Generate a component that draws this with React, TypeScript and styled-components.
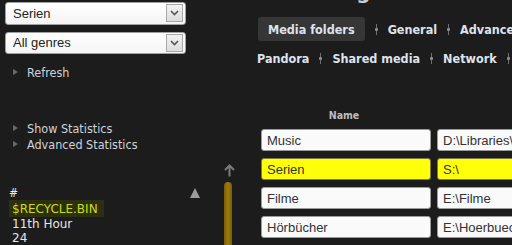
import React from "react";
import styled, { createGlobalStyle } from "styled-components";

const Global = createGlobalStyle`
  html, body { margin: 0; padding: 0; background: #1c1c1c; overflow: hidden; }
  * { box-sizing: border-box; }
`;

const Page = styled.div`
  width: 512px;
  height: 245px;
  display: flex;
  overflow: hidden;
  background: #1c1c1c;
  font-family: "DejaVu Sans Condensed", "DejaVu Sans", sans-serif;
`;

const Left = styled.div`
  width: 215px;
  flex: none;
  padding: 2px 0 0 5px;
  display: flex;
  flex-direction: column;
`;

const SelectBox = styled.div`
  width: 181px;
  height: 23px;
  background: linear-gradient(#ffffff, #f4f4f4);
  border: 1px solid #a0a0a0;
  border-radius: 3px;
  display: flex;
  align-items: center;
  justify-content: space-between;
  padding: 0 2px 0 7px;
  font-family: "Liberation Sans", Arial, sans-serif;
  font-size: 13px;
  color: #222;
  & + & { margin-top: 7px; }
`;

const SelectArrow = styled.div`
  width: 17px;
  height: 18px;
  border: 1px solid #a8a8a8;
  background: linear-gradient(#f2f2f2, #dcdcdc);
  display: flex;
  align-items: center;
  justify-content: center;
`;

const Menu = styled.div<{ $top: number }>`
  margin-top: ${(p) => p.$top}px;
  display: flex;
  flex-direction: column;
`;

const MenuItem = styled.div`
  height: 16px;
  display: flex;
  align-items: center;
  padding-left: 8px;
  font-size: 12.5px;
  color: #cfd3da;
  &::before {
    content: "";
    width: 0;
    height: 0;
    border-top: 3.5px solid transparent;
    border-bottom: 3.5px solid transparent;
    border-left: 5px solid #6a6a6a;
    margin-right: 9px;
  }
`;

const ListHeader = styled.div`
  margin-top: 34px;
  height: 14px;
  display: flex;
  align-items: center;
  justify-content: space-between;
  padding-left: 4px;
  padding-right: 15px;
  font-size: 12px;
  color: #eeeeee;
`;

const SortUp = styled.span`
  width: 0;
  height: 0;
  border-left: 5.5px solid transparent;
  border-right: 5.5px solid transparent;
  border-bottom: 10px solid #9a9a9a;
`;

const ListRow = styled.div<{ $active?: boolean }>`
  height: ${(p) => (p.$active ? 17 : 14)}px;
  width: ${(p) => (p.$active ? "95px" : "auto")};
  margin-left: 4px;
  padding-left: 3px;
  display: flex;
  align-items: center;
  font-family: "DejaVu Sans", sans-serif;
  font-size: 12px;
  color: ${(p) => (p.$active ? "#c9de10" : "#e6e6e6")};
  background: ${(p) => (p.$active ? "#2d2f12" : "transparent")};
`;

const ScrollCol = styled.div`
  width: 30px;
  flex: none;
  display: flex;
  flex-direction: column;
  align-items: flex-start;
  padding: 164px 0 0 9px;
`;

const ScrollArrow = styled.div`
  width: 11px;
  display: flex;
  justify-content: center;
`;

const ScrollBar = styled.div`
  margin-top: 5px;
  width: 8px;
  flex: 1;
  border-radius: 4px 4px 0 0;
  background: linear-gradient(90deg, #7a5c06, #a07c10 50%, #7a5c06);
`;

const Right = styled.div`
  flex: 1;
  min-width: 0;
  padding-left: 12px;
  display: flex;
  flex-direction: column;
  overflow: hidden;
`;

const Title = styled.div`
  margin-top: -20px;
  height: 24px;
  display: flex;
  align-items: center;
  gap: 12px;
  padding-left: 5px;
  font-family: "DejaVu Sans", sans-serif;
  font-weight: bold;
  font-size: 20px;
  color: #c8ccd4;
  white-space: nowrap;
`;

const TabRow = styled.div<{ $top: number }>`
  margin-top: ${(p) => p.$top}px;
  display: flex;
  align-items: center;
  white-space: nowrap;
`;

const Tab = styled.div<{ $active?: boolean }>`
  height: 24px;
  display: flex;
  align-items: center;
  padding: 0 ${(p) => (p.$active ? 10 : 0)}px;
  margin-left: ${(p) => (p.$active ? 1 : 0)}px;
  border-radius: 3px;
  background: ${(p) => (p.$active ? "#363636" : "transparent")};
  font-weight: bold;
  font-size: 12.5px;
  color: #dde3ec;
  flex: none;
`;

const Sep = styled.span`
  position: relative;
  flex: none;
  width: 3px;
  height: 11px;
  margin: 0 10px;
  &::before {
    content: "";
    position: absolute;
    left: 1px;
    top: 0;
    bottom: 0;
    width: 1px;
    background: #6e6e6e;
  }
  &::after {
    content: "";
    position: absolute;
    left: 0;
    top: 4px;
    width: 3px;
    height: 3px;
    border-radius: 1px;
    background: #8a8a8a;
  }
`;

const Header = styled.div`
  margin-top: 38px;
  width: 174px;
  text-align: center;
  font-weight: bold;
  font-size: 10.5px;
  color: #bdbdbd;
  height: 14px;
  line-height: 14px;
`;

const Table = styled.div`
  margin-top: 7px;
  display: grid;
  grid-template-columns: 170px 120px;
  column-gap: 6px;
  row-gap: 7px;
  padding-left: 4px;
`;

const Cell = styled.div<{ $mark?: boolean }>`
  height: 22px;
  border: 1px solid ${(p) => (p.$mark ? "#7a7a40" : "#9a9a9a")};
  border-radius: 3px;
  background: ${(p) => (p.$mark ? "#ffff0a" : "#fafafa")};
  display: flex;
  align-items: center;
  padding-left: 5px;
  font-family: "Liberation Sans", Arial, sans-serif;
  font-size: 13px;
  color: #333;
  white-space: nowrap;
  overflow: hidden;
`;

const Chevron = () => (
  <svg width="9" height="6" viewBox="0 0 9 6">
    <path d="M1 1 L4.5 4.5 L8 1" fill="none" stroke="#555" strokeWidth="1.6" />
  </svg>
);

const UpArrow = () => (
  <svg width="11" height="13" viewBox="0 0 11 13">
    <path d="M5.5 1.5 V12.5 M1 6 L5.5 1.5 L10 6" fill="none" stroke="#7a7a7a" strokeWidth="2" />
  </svg>
);

const Gear = () => (
  <svg width="14" height="24" viewBox="0 0 14 24">
    <rect x="1" y="10" width="3" height="10" fill="#9aa0a8" />
    <rect x="6" y="12" width="3" height="8" fill="#9aa0a8" />
    <rect x="11" y="16" width="2" height="4" fill="#9aa0a8" />
  </svg>
);

const folders: [string, string, boolean][] = [
  ["Music", "D:\\Libraries\\Tracks", false],
  ["Serien", "S:\\", true],
  ["Filme", "E:\\Filme", false],
  ["Hörbücher", "E:\\Hoerbuecher", false],
];

export default function App() {
  return (
    <Page>
      <Global />
      <Left>
        <SelectBox>
          Serien
          <SelectArrow>
            <Chevron />
          </SelectArrow>
        </SelectBox>
        <SelectBox>
          All genres
          <SelectArrow>
            <Chevron />
          </SelectArrow>
        </SelectBox>
        <Menu $top={10}>
          <MenuItem>Refresh</MenuItem>
        </Menu>
        <Menu $top={40}>
          <MenuItem>Show Statistics</MenuItem>
          <MenuItem>Advanced Statistics</MenuItem>
        </Menu>
        <ListHeader>
          #
          <SortUp />
        </ListHeader>
        <ListRow $active>$RECYCLE.BIN</ListRow>
        <ListRow>11th Hour</ListRow>
        <ListRow>24</ListRow>
      </Left>
      <ScrollCol>
        <ScrollArrow>
          <UpArrow />
        </ScrollArrow>
        <ScrollBar />
      </ScrollCol>
      <Right>
        <Title>
          <Gear />
          Settings
        </Title>
        <TabRow $top={13}>
          <Tab $active>Media folders</Tab>
          <Sep />
          <Tab>General</Tab>
          <Sep />
          <Tab>Advanced</Tab>
        </TabRow>
        <TabRow $top={5}>
          <Tab>Pandora</Tab>
          <Sep />
          <Tab>Shared media</Tab>
          <Sep />
          <Tab>Network</Tab>
          <Sep />
          <Tab>Plugins</Tab>
        </TabRow>
        <Header>Name</Header>
        <Table>
          {folders.map(([n, p, m]) => (
            <React.Fragment key={n}>
              <Cell $mark={m}>{n}</Cell>
              <Cell $mark={m}>{p}</Cell>
            </React.Fragment>
          ))}
        </Table>
      </Right>
    </Page>
  );
}
